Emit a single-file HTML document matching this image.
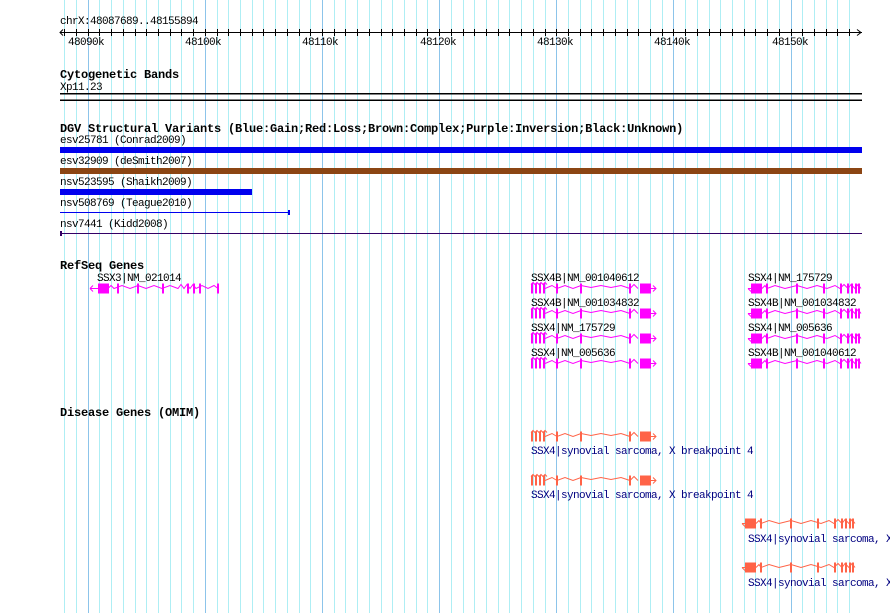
<!DOCTYPE html>
<html><head><style>
body{margin:0;background:#fff;}
svg{display:block;font-family:"Liberation Mono",monospace;font-size:11px;letter-spacing:-0.6px;}
.b{font-weight:bold;font-size:12px;letter-spacing:-0.2px;}
</style></head><body>
<svg width="890" height="613" xmlns="http://www.w3.org/2000/svg">
<defs>
<g id="fw">
 <path fill="none" stroke-width="1" d="M0,-4l2,-2l2,2l2,-2l2,2l2,-2l2,2l2,-2l2,2M14,0l7,-3l5,3l8,-3l8,3l8,-3l10,2l10,-2l10,2l10,-2l9,3l4,-4l4,4M120,0h5M122,-3l3,3l-3,3"/>
 <path fill="none" stroke-width="2" d="M1,-5v10M5,-5v10M9,-5v10M13,-5v10M26,-5v10M50,-5v10M99,-5v10"/>
 <rect x="109" y="-5" width="11" height="10" stroke="none"/>
</g>
<g id="rv">
 <path fill="none" stroke-width="1" d="M0,0h3M3,0l3,-3M0,0l3,3M14,0l3,-3l2,3l8,-3l10,3l12,-3l10,3l10,-3l10,3l8,-3l5,3l4,-4l4,4l3,-4l4,4l3,-4l3,4"/>
 <path fill="none" stroke-width="2" d="M19,-5v10M49,-5v10M76,-5v10M93,-5v10M100,-5v10M104,-5v10M108,-5v10M111,-5v10"/>
 <rect x="3" y="-5" width="11" height="10" stroke="none"/>
</g>
</defs>
<g stroke="#aeeef4" stroke-width="1">
<path d="M64.5,0V613M76.5,0V613M88.5,0V613M99.5,0V613M111.5,0V613M123.5,0V613M135.5,0V613M146.5,0V613M158.5,0V613M170.5,0V613M181.5,0V613M193.5,0V613M205.5,0V613M217.5,0V613M228.5,0V613M240.5,0V613M252.5,0V613M263.5,0V613M275.5,0V613M287.5,0V613M299.5,0V613M310.5,0V613M322.5,0V613M334.5,0V613M345.5,0V613M357.5,0V613M369.5,0V613M381.5,0V613M392.5,0V613M404.5,0V613M416.5,0V613M427.5,0V613M439.5,0V613M451.5,0V613M463.5,0V613M474.5,0V613M486.5,0V613M498.5,0V613M509.5,0V613M521.5,0V613M533.5,0V613M545.5,0V613M556.5,0V613M568.5,0V613M580.5,0V613M591.5,0V613M603.5,0V613M615.5,0V613M627.5,0V613M638.5,0V613M650.5,0V613M662.5,0V613M673.5,0V613M685.5,0V613M697.5,0V613M709.5,0V613M720.5,0V613M732.5,0V613M744.5,0V613M755.5,0V613M767.5,0V613M779.5,0V613M791.5,0V613M802.5,0V613M814.5,0V613M826.5,0V613M837.5,0V613M849.5,0V613"/>
</g>
<g stroke="#8cc4ea"><path d="M88.5,0V613M205.5,0V613M322.5,0V613M439.5,0V613M556.5,0V613M673.5,0V613M791.5,0V613"/></g>
<g fill="#000">
<text x="60" y="24">chrX:48087689..48155894</text>
<path d="M60,32.5H862M857,29.5l4,3l-4,3M63,29.5l-3,3l3,3" stroke="#000" fill="none"/>
<path stroke="#000" d="M64.5,29v7M76.5,29v7M88.5,29v7M99.5,29v7M111.5,29v7M123.5,29v7M135.5,29v7M146.5,29v7M158.5,29v7M170.5,29v7M181.5,29v7M193.5,29v7M205.5,29v7M217.5,29v7M228.5,29v7M240.5,29v7M252.5,29v7M263.5,29v7M275.5,29v7M287.5,29v7M299.5,29v7M310.5,29v7M322.5,29v7M334.5,29v7M345.5,29v7M357.5,29v7M369.5,29v7M381.5,29v7M392.5,29v7M404.5,29v7M416.5,29v7M427.5,29v7M439.5,29v7M451.5,29v7M463.5,29v7M474.5,29v7M486.5,29v7M498.5,29v7M509.5,29v7M521.5,29v7M533.5,29v7M545.5,29v7M556.5,29v7M568.5,29v7M580.5,29v7M591.5,29v7M603.5,29v7M615.5,29v7M627.5,29v7M638.5,29v7M650.5,29v7M662.5,29v7M673.5,29v7M685.5,29v7M697.5,29v7M709.5,29v7M720.5,29v7M732.5,29v7M744.5,29v7M755.5,29v7M767.5,29v7M779.5,29v7M791.5,29v7M802.5,29v7M814.5,29v7M826.5,29v7M837.5,29v7M849.5,29v7"/>
<text x="68" y="45">48090k</text><text x="185" y="45">48100k</text><text x="302" y="45">48110k</text><text x="420" y="45">48120k</text><text x="537" y="45">48130k</text><text x="654" y="45">48140k</text><text x="772" y="45">48150k</text>
<text class="b" x="60" y="78">Cytogenetic Bands</text>
<text x="60" y="90">Xp11.23</text>
<rect x="60" y="93" width="802" height="1.5"/><rect x="60" y="99.5" width="802" height="1.5"/>
<text class="b" x="60" y="132">DGV Structural Variants (Blue:Gain;Red:Loss;Brown:Complex;Purple:Inversion;Black:Unknown)</text>
<text x="60" y="143">esv25781 (Conrad2009)</text>
<rect x="60" y="147" width="802" height="6" fill="#0000ee"/>
<text x="60" y="164">esv32909 (deSmith2007)</text>
<rect x="60" y="168" width="802" height="6" fill="#8b4513"/>
<text x="60" y="185">nsv523595 (Shaikh2009)</text>
<rect x="60" y="189" width="192" height="6" fill="#0000ee"/>
<text x="60" y="206">nsv508769 (Teague2010)</text>
<rect x="60" y="212" width="229" height="1" fill="#0000ee"/><rect x="288" y="210" width="2" height="5" fill="#0000ee"/>
<text x="60" y="227">nsv7441 (Kidd2008)</text>
<rect x="60" y="233" width="802" height="1" fill="#330066"/><rect x="60" y="231" width="2" height="5" fill="#330066"/>
<text class="b" x="60" y="269">RefSeq Genes</text>
<text x="97" y="281">SSX3|NM_021014</text>
<text x="531" y="281">SSX4B|NM_001040612</text><text x="531" y="306">SSX4B|NM_001034832</text><text x="531" y="331">SSX4|NM_175729</text><text x="531" y="356">SSX4|NM_005636</text>
<text x="748" y="281">SSX4|NM_175729</text><text x="748" y="306">SSX4B|NM_001034832</text><text x="748" y="331">SSX4|NM_005636</text><text x="748" y="356">SSX4B|NM_001040612</text>
<text class="b" x="60" y="416">Disease Genes (OMIM)</text>
</g>
<g fill="#ff00ff" stroke="#ff00ff">
<g transform="translate(90,288.5)">
 <path fill="none" d="M0,0h8M0,0l3,-3M0,0l3,3M18,0l3,-3l3,3l8,-3l8,3l8,-3l8,3l8,-3l8,3l8,-3l8,3l3,-4l3,4l3,-4l3,4l3,-4l3,4l6,-3l6,3l6,-3l4,3"/>
 <path fill="none" stroke-width="2" d="M18,-5v10M28,-5v10M48,-5v10M73,-5v10M98,-5v10M104,-5v10M110,-5v10M128,-5v10"/>
 <rect x="8" y="-5" width="9" height="10" stroke="none"/>
</g>
<use href="#fw" x="531" y="288.5"/><use href="#fw" x="531" y="313.5"/><use href="#fw" x="531" y="338.5"/><use href="#fw" x="531" y="363.5"/>
<use href="#rv" x="748" y="288.5"/><use href="#rv" x="748" y="313.5"/><use href="#rv" x="748" y="338.5"/><use href="#rv" x="748" y="363.5"/>
</g>
<g fill="#ff6347" stroke="#ff6347">
<use href="#fw" x="531" y="436.5"/><use href="#fw" x="531" y="480.5"/>
<use href="#rv" x="742" y="523.5"/><use href="#rv" x="742" y="567.5"/>
</g>
<g fill="#000080">
<text x="531" y="454">SSX4|synovial sarcoma, X breakpoint 4</text>
<text x="531" y="498">SSX4|synovial sarcoma, X breakpoint 4</text>
<text x="748" y="542">SSX4|synovial sarcoma, X</text>
<text x="748" y="586">SSX4|synovial sarcoma, X</text>
</g>
</svg>
</body></html>
